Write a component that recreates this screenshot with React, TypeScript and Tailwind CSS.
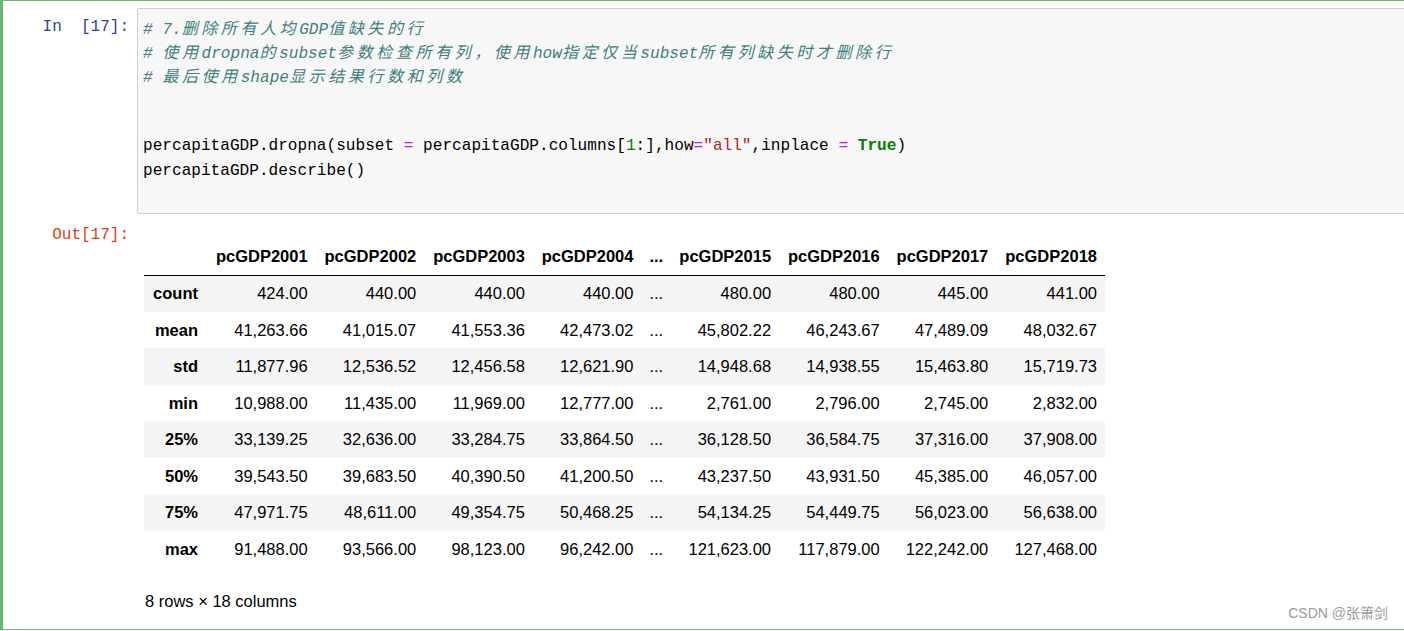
import React from "react";

const MONO = "'Liberation Mono','Noto Sans CJK SC',monospace";
const SANS = "'Liberation Sans',Arial,'Noto Sans CJK SC',sans-serif";

const CJK_RE = /([\u3000-\u9fff\uff00-\uffef]+)/;

function Mixed({ text }: { text: string }) {
  const parts = text.split(CJK_RE);
  return (
    <>
      {parts.map((p, i) =>
        CJK_RE.test(p) ? (
          <span key={i} className="tracking-[3.5px]" style={{ fontFamily: "'Noto Sans CJK SC',sans-serif" }}>
            {p}
          </span>
        ) : (
          <span key={i}>{p}</span>
        )
      )}
    </>
  );
}

const cols = ["pcGDP2001", "pcGDP2002", "pcGDP2003", "pcGDP2004", "...", "pcGDP2015", "pcGDP2016", "pcGDP2017", "pcGDP2018"];

const rows: [string, string[]][] = [
  ["count", ["424.00", "440.00", "440.00", "440.00", "...", "480.00", "480.00", "445.00", "441.00"]],
  ["mean", ["41,263.66", "41,015.07", "41,553.36", "42,473.02", "...", "45,802.22", "46,243.67", "47,489.09", "48,032.67"]],
  ["std", ["11,877.96", "12,536.52", "12,456.58", "12,621.90", "...", "14,948.68", "14,938.55", "15,463.80", "15,719.73"]],
  ["min", ["10,988.00", "11,435.00", "11,969.00", "12,777.00", "...", "2,761.00", "2,796.00", "2,745.00", "2,832.00"]],
  ["25%", ["33,139.25", "32,636.00", "33,284.75", "33,864.50", "...", "36,128.50", "36,584.75", "37,316.00", "37,908.00"]],
  ["50%", ["39,543.50", "39,683.50", "40,390.50", "41,200.50", "...", "43,237.50", "43,931.50", "45,385.00", "46,057.00"]],
  ["75%", ["47,971.75", "48,611.00", "49,354.75", "50,468.25", "...", "54,134.25", "54,449.75", "56,023.00", "56,638.00"]],
  ["max", ["91,488.00", "93,566.00", "98,123.00", "96,242.00", "...", "121,623.00", "117,879.00", "122,242.00", "127,468.00"]],
];

export default function App() {
  return (
    <div className="relative w-full h-[631px] overflow-hidden bg-white">
      <div className="h-[630px] border-t border-b border-l-[3px] border-[#66BB6A]">
        {/* input row */}
        <div className="flex pt-[7px]">
          <div
            className="w-[134px] shrink-0 text-right pr-[8px] pt-[7px] text-[16px] leading-[24px] text-[#303F9F] whitespace-pre"
            style={{ fontFamily: MONO }}
          >
            {"In  [17]:"}
          </div>
          <div
            className="flex-1 -mr-[20px] border border-[#cfcfcf] rounded-[2px] bg-[#f7f7f7] pl-[5px] pt-[6px] pb-[30px] text-[16.1px] leading-[24px] text-black whitespace-pre"
            style={{ fontFamily: MONO }}
          >
            <div className="h-[24px] italic text-[#408080]">
              <Mixed text="# 7.删除所有人均GDP值缺失的行" />
            </div>
            <div className="h-[24px] italic text-[#408080]">
              <Mixed text="# 使用dropna的subset参数检查所有列，使用how指定仅当subset所有列缺失时才删除行" />
            </div>
            <div className="h-[24px] italic text-[#408080]">
              <Mixed text="# 最后使用shape显示结果行数和列数" />
            </div>
            <div className="h-[23.5px]">{" "}</div>
            <div className="h-[23.5px]">{" "}</div>
            <div className="h-[24.5px] leading-[24.5px]">
              {"percapitaGDP.dropna(subset "}
              <span className="text-[#AA22FF]">=</span>
              {" percapitaGDP.columns["}
              <span className="text-[#008000]">1</span>
              {":],how"}
              <span className="text-[#AA22FF]">=</span>
              <span className="text-[#BA2121]">"all"</span>
              {",inplace "}
              <span className="text-[#AA22FF]">=</span>{" "}
              <span className="text-[#008000] font-bold">True</span>
              {")"}
            </div>
            <div className="h-[24.5px] leading-[24.5px]">percapitaGDP.describe()</div>
          </div>
        </div>

        {/* output row */}
        <div className="flex">
          <div
            className="w-[134px] shrink-0 text-right pr-[8px] pt-[9px] text-[16px] leading-[24px] text-[#D84315] whitespace-pre"
            style={{ fontFamily: MONO }}
          >
            {"Out[17]:"}
          </div>
          <div className="pl-[7px] pt-[25px] text-black" style={{ fontFamily: SANS }}>
            <table className="table-fixed border-collapse w-[961px] text-[16.5px]">
              <colgroup>
                <col className="w-[63px]" />
                <col className="w-[108.6px]" />
                <col className="w-[108.6px]" />
                <col className="w-[108.6px]" />
                <col className="w-[108.6px]" />
                <col className="w-[29px]" />
                <col className="w-[108.6px]" />
                <col className="w-[108.6px]" />
                <col className="w-[108.6px]" />
                <col className="w-[108.6px]" />
              </colgroup>
              <thead>
                <tr className="h-[36px]">
                  <th className="border-b border-black px-[8px]"></th>
                  {cols.map((c, i) => (
                    <th key={i} className="border-b border-black px-[8px] text-right font-bold whitespace-nowrap">
                      {c}
                    </th>
                  ))}
                </tr>
              </thead>
              <tbody>
                {rows.map(([label, vals], ri) => (
                  <tr key={label} className={ri % 2 === 0 ? "h-[36.6px] bg-[#f5f5f5]" : "h-[36.6px] bg-white"}>
                    <th className="pl-[8px] pr-[9px] text-right font-bold whitespace-nowrap">{label}</th>
                    {vals.map((v, i) => (
                      <td key={i} className="px-[8px] text-right whitespace-nowrap">
                        {v}
                      </td>
                    ))}
                  </tr>
                ))}
              </tbody>
            </table>
            <div className="mt-[23px] text-[16.5px] leading-[20px] pl-[1px]">8 rows × 18 columns</div>
          </div>
        </div>
      </div>
      <div
        className="absolute right-[16px] bottom-[9px] text-[14px] leading-[17px] text-[#9a9a9a]"
        style={{ fontFamily: SANS }}
      >
        CSDN @张箫剑
      </div>
    </div>
  );
}
